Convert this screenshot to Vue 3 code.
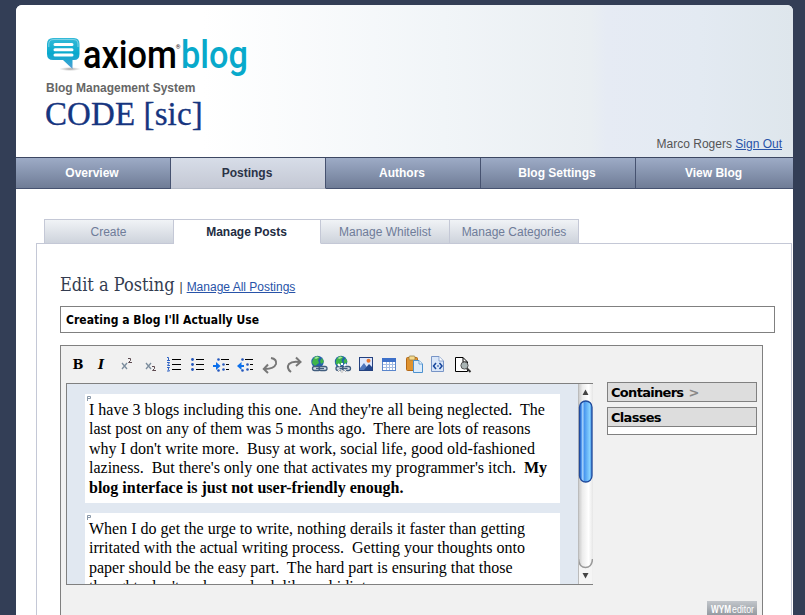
<script setup>
const nav = [
  { label: 'Overview' },
  { label: 'Postings', active: true },
  { label: 'Authors' },
  { label: 'Blog Settings' },
  { label: 'View Blog' },
]
const tabs = [
  { label: 'Create', cls: 'create' },
  { label: 'Manage Posts', cls: 'current' },
  { label: 'Manage Whitelist', cls: 'whitelist' },
  { label: 'Manage Categories', cls: 'categories' },
]
const paragraphs = [
  [
    { text: "I have 3 blogs including this one.\u00a0 And they're all being neglected.\u00a0 The" },
    { text: 'last post on any of them was 5 months ago.\u00a0 There are lots of reasons' },
    { text: "why I don't write more.\u00a0 Busy at work, social life, good old-fashioned" },
    { text: "laziness.\u00a0 But there's only one that activates my programmer's itch.\u00a0 ", bold: 'My' },
    { text: '', bold: 'blog interface is just not user-friendly enough.' },
  ],
  [
    { text: 'When I do get the urge to write, nothing derails it faster than getting' },
    { text: 'irritated with the actual writing process.\u00a0 Getting your thoughts onto' },
    { text: 'paper should be the easy part.\u00a0 The hard part is ensuring that those' },
    { text: "thoughts don't make you look like a chidiot." },
  ],
]
</script>

<template>
  <div class="page">
    <header class="header">
      <svg class="logo" width="204" height="44" viewBox="0 0 204 44">
        <defs>
          <linearGradient id="bubble" x1="0" y1="0" x2="0" y2="1">
            <stop offset="0" stop-color="#35bad8" />
            <stop offset="0.5" stop-color="#08a9cd" />
            <stop offset="0.8" stop-color="#2fa5d2" />
            <stop offset="1" stop-color="#5b9bd3" />
          </linearGradient>
          <radialGradient id="shade">
            <stop offset="0" stop-color="#777" stop-opacity="0.7" />
            <stop offset="1" stop-color="#999" stop-opacity="0" />
          </radialGradient>
        </defs>
        <ellipse cx="23" cy="34" rx="11" ry="2" fill="url(#shade)" />
        <path d="M6 3H27Q32.500 3 32.500 9V19Q32.500 25 27 25H25.500V34L16 25H6Q0 25 0 19V9Q0 3 6 3Z" fill="url(#bubble)" />
        <path d="M1.800 12V9Q1.800 4.500 7 4.500H26Q31 4.500 31 9V12" fill="none" stroke="#7dd2e6" stroke-width="1" />
        <path d="M8 9.500H25M8 14.700H25M8 20H25" stroke="#fff" stroke-width="3" stroke-linecap="round" />
        <text x="36" y="33" class="word" fill="#000" textLength="94" lengthAdjust="spacingAndGlyphs">axiom</text>
        <text x="128.800" y="14" class="reg" fill="#111">®</text>
        <text x="134" y="33" class="word" fill="#08a9cb" textLength="67" lengthAdjust="spacingAndGlyphs">blog</text>
      </svg>
      <div class="tagline">Blog Management System</div>
      <div class="title-row">
        <h1>CODE [sic]</h1>
        <div class="user">Marco Rogers <a>Sign Out</a></div>
      </div>
    </header>

    <nav class="nav">
      <a v-for="n in nav" :key="n.label" :class="{ active: n.active }">{{ n.label }}</a>
    </nav>

    <div class="tabs">
      <a v-for="t in tabs" :key="t.label" :class="t.cls">{{ t.label }}</a>
    </div>

    <main class="panel">
      <div class="heading">
        <h2>Edit a Posting</h2><span class="bar">|</span><a>Manage All Postings</a>
      </div>
      <div class="title-input"><span>Creating a Blog I'll Actually Use</span></div>

      <div class="editor">
        <div class="left">
          <svg class="tools" width="410" height="20" viewBox="0 0 410 20">
            <text x="6.500" y="15" class="bold">B</text>
            <text x="32" y="15" class="bold ital">I</text>
            <g fill="none" stroke="#7b8c9d" stroke-width="1.300">
              <path d="M56 9L61 15M61 9L56 15" />
              <path d="M80 9L85 15M85 9L80 15" />
            </g>
            <g fill="none" stroke="#5d4a50" stroke-width="1">
              <path d="M62 4.500H64.500V6.500L62.500 8.500H66" />
              <path d="M86 12.500H88.500V14.500L86.500 16.500H90" />
            </g>
            <g stroke="#000" stroke-width="1">
              <path d="M106 5.500H115M106 10.500H115M106 15.500H115" />
              <path d="M130 5.500H138M130 10.500H138M130 15.500H138" />
              <path d="M155 5.500H163M160 10.500H163M160 15.500H163" />
              <path d="M179 5.500H187M184 10.500H187M184 15.500H187" />
            </g>
            <path d="M101 3.500H102.500V6.500M101 6.500H104M101 8.500H103.500L101.500 11.500H104M101 13.500H103.500L102 15L103.500 17H101" fill="none" stroke="#2f62c4" />
            <g fill="#2457bd">
              <circle cx="126.500" cy="5.500" r="1.400" /><circle cx="126.500" cy="10.500" r="1.400" /><circle cx="126.500" cy="15.500" r="1.400" />
              <circle cx="152.500" cy="5.500" r="1.300" /><circle cx="157.500" cy="10.500" r="1.300" /><circle cx="157.500" cy="15.500" r="1.300" /><circle cx="152.500" cy="16.500" r="1.300" />
              <circle cx="176.500" cy="5.500" r="1.300" /><circle cx="181.500" cy="10.500" r="1.300" /><circle cx="181.500" cy="15.500" r="1.300" /><circle cx="176.500" cy="16.500" r="1.300" />
            </g>
            <path d="M147 11H150V8L154.500 12L150 16V13H147ZM178 11H175.500V8L171 12L175.500 16V13H178Z" fill="#0c70ec" />
            <g fill="none" stroke="#777" stroke-width="2">
              <path d="M205 4Q211 5 210 10Q208 15 199 15" />
              <path d="M202 10.500L197.800 15L202 19" />
              <path d="M225 18Q220 14 223 10Q226 7 233 8" />
              <path d="M230 3.500L234.500 8L230 12" />
            </g>
            <g v-for="x in [0, 23.500]" :key="x" :transform="`translate(${x} 0)`">
              <circle cx="251.500" cy="8" r="6.200" fill="#2461ad" />
              <path d="M247 5L250 2L254 3L252 6L253 9L249 12L246 9ZM256 4L258 8L255 10L254 7Z" fill="#3eb54a" />
              <path d="M248 4L251 2.500L253 3.500L250 5Z" fill="#a9e59d" />
              <rect x="246.500" y="12.500" width="8" height="4" rx="2" fill="#d4dde8" stroke="#415d7e" stroke-width="1.300" />
              <rect x="253" y="12.500" width="8" height="4" rx="2" fill="#d4dde8" stroke="#415d7e" stroke-width="1.300" />
              <path d="M250 14.500H258" stroke="#415d7e" stroke-width="1.200" />
            </g>
            <path d="M276 9V11M272 10L274 12M280 10L278 12M276 16V19M272 18L274 16M280 18L278 16" stroke="#fff" stroke-width="2" />
            <path d="M276 16V19M272 18L274 16M280 18L278 16" stroke="#888" stroke-width="0.700" />
            <rect x="293.500" y="3.500" width="13" height="13" fill="#dfe7fb" stroke="#24417f" />
            <path d="M294 14L298 9L303 16H294Z" fill="#4e75bd" />
            <path d="M298 16L303 10L306 13V16Z" fill="#24478e" />
            <circle cx="302.500" cy="6.800" r="2" fill="#e9752e" />
            <rect x="316.500" y="4.500" width="13" height="12" fill="#fff" stroke="#5a86cc" />
            <path d="M316 4H330V8H316Z" fill="#3d70c9" />
            <path d="M317 10.500H329M317 13.500H329M320.500 8V16M323.500 8V16M326.500 8V16" stroke="#a4bce3" />
            <rect x="340.500" y="3.500" width="11" height="13" rx="1" fill="#df9330" stroke="#b56816" />
            <rect x="343" y="2" width="6" height="4" rx="1" fill="#f7da8d" stroke="#94804a" stroke-width="0.800" />
            <path d="M347.500 6.500H353L356.500 10V18.500H347.500Z" fill="#ddecfb" stroke="#4c91cf" />
            <path d="M353 6.500V10H356" fill="#fff" stroke="#4c91cf" stroke-width="0.800" />
            <path d="M365.500 2.500H373L377.500 7V17.500H365.500Z" fill="#d9e6f8" stroke="#7794c6" />
            <path d="M373 2.500V7H377" fill="#fff" stroke="#7794c6" stroke-width="0.800" />
            <path d="M370 9L367.500 12L370 15M373.500 9L376 12L373.500 15" fill="none" stroke="#17469c" stroke-width="1.500" />
            <path d="M371 12H373" stroke="#17469c" />
            <path d="M389.500 3.500H397L401.500 8V17.500H389.500Z" fill="#fff" stroke="#000" />
            <path d="M397 3.500V8H401" fill="none" stroke="#000" />
            <path d="M400.500 14L404.500 18" stroke="#333" stroke-width="2" />
            <circle cx="398.500" cy="11.500" r="3.600" fill="#aab5b5" stroke="#555" />
          </svg>

          <div class="frame">
            <div class="content">
              <div v-for="(para, i) in paragraphs" :key="i" class="para">
                <svg class="mark" width="4" height="5" viewBox="0 0 4 5"><path d="M0.500 5V0.500H3.500V2.500H0.500" fill="none" stroke="#8897a8" /></svg>
                <p v-for="line in para" :key="line.text">{{ line.text }}<b v-if="line.bold">{{ line.bold }}</b></p>
              </div>
            </div>
            <div class="scroll">
              <svg width="15" height="200" viewBox="0 0 15 200">
                <defs>
                  <linearGradient id="track"><stop offset="0" stop-color="#c4c4c4" /><stop offset="0.300" stop-color="#ececec" /><stop offset="0.700" stop-color="#fff" /><stop offset="1" stop-color="#e6e6e6" /></linearGradient>
                  <linearGradient id="thumb"><stop offset="0" stop-color="#1a55c4" /><stop offset="0.150" stop-color="#4d94ec" /><stop offset="0.250" stop-color="#a5d1fb" /><stop offset="0.400" stop-color="#4a98ef" /><stop offset="0.800" stop-color="#85d0ff" /><stop offset="1" stop-color="#3d86de" /></linearGradient>
                </defs>
                <rect width="15" height="200" fill="url(#track)" />
                <path d="M0.500 175Q1 183.500 7.500 183.500Q14 183.500 14.500 175V200H0.500Z" fill="#f5f5f5" />
                <path d="M0.500 175Q1 183.500 7.500 183.500Q14 183.500 14.500 175" fill="none" stroke="#999" stroke-width="1.500" />
                <path d="M0.500 0V200" stroke="#bbb" />
                <rect x="1.500" y="17" width="12.500" height="81" rx="6.200" fill="url(#thumb)" stroke="#214b9c" stroke-width="1.300" />
                <path d="M4.500 11L7.500 5.500L10.500 11ZM4.500 189L7.500 194.500L10.500 189Z" fill="#444" />
              </svg>
            </div>
          </div>
        </div>

        <aside class="side">
          <div class="box"><span>Containers</span><span class="gt">&gt;</span></div>
          <div class="box"><span>Classes</span></div>
          <div class="empty"></div>
          <div class="brand">
            <svg width="50" height="16" viewBox="0 0 50 16">
              <text x="4" y="12" class="wym" textLength="20" lengthAdjust="spacingAndGlyphs">WYM</text>
              <text x="25" y="12" class="ed" textLength="22" lengthAdjust="spacingAndGlyphs">editor</text>
            </svg>
          </div>
        </aside>
      </div>
    </main>
  </div>
</template>

<style>
body { background: #333e56; overflow: hidden; }
</style>

<style scoped>
* { box-sizing: border-box; }
h1, h2, p { margin: 0; font-weight: normal; }
.page {
  margin: 5px 12px 0 16px;
  height: 610px;
  background: #fff;
  border-radius: 6px 6px 0 0;
  overflow: hidden;
  font-family: "Liberation Sans", Arial, sans-serif;
  font-size: 12px;
  display: flex;
  flex-direction: column;
}
.header {
  height: 152px;
  flex: none;
  background: linear-gradient(90deg, #fff 24%, #f1f5f8 55%, #e9eef2 74%, #e6ebf4 76%, #e3eaf2 88%, #dee6ec 100%);
  padding: 30px 10px 0 29px;
  display: flex;
  flex-direction: column;
}
.logo { display: block; flex: none; margin-left: 2px; overflow: visible; }
.word { font-family: Roboto, sans-serif; font-size: 39px; font-weight: 500; }
.reg { font-family: Roboto, sans-serif; font-size: 6px; }
.tagline {
  font-weight: bold;
  color: #666;
  line-height: 14px;
  margin: 2px 0 0 1px;
}
.title-row { display: flex; justify-content: space-between; height: 62px; }
h1 {
  font-family: "Liberation Serif", Georgia, serif;
  font-size: 33px;
  line-height: 38px;
  letter-spacing: 0.1px;
  color: #16357f;
  -webkit-text-stroke: 0.3px #16357f;
  white-space: nowrap;
}
.user { align-self: flex-end; padding: 0 1px 6px 0; line-height: 14px; color: #555; }
a { text-decoration: none; }
.user a, .heading a { color: #2853a8; text-decoration: underline; }
.nav {
  flex: none;
  height: 32px;
  display: flex;
  border-top: 1px solid #3c4762;
}
.nav a {
  width: 155px;
  border-right: 1px solid #465270;
  border-bottom: 1px solid #465270;
  background: linear-gradient(#9dabc6, #6f7c96);
  color: #fff;
  font-weight: bold;
  text-align: center;
  line-height: 30px;
  padding-right: 2px;
}
.nav a:last-child { width: auto; flex: 1; border-right: 0; }
.nav a.active { background: linear-gradient(#d7dde8, #c4c8d4); color: #2b3347; border-bottom-color: #b3b9c6; }
.tabs { flex: none; display: flex; margin: 30px 0 0 28px; height: 25px; position: relative; z-index: 1; }
.tabs a {
  border: 1px solid #c4c8d6;
  border-left: 0;
  background: linear-gradient(#f0f3f6, #ced3dc);
  color: #6f7c99;
  text-align: center;
  line-height: 24px;
}
.tabs .create { width: 130px; border-left: 1px solid #c4c8d6; padding-right: 1px; }
.tabs .current { width: 147px; background: #fff; color: #222c42; font-weight: bold; border-bottom-color: #fff; padding-right: 1px; }
.tabs .whitelist { width: 129px; }
.tabs .categories { width: 129px; }
.panel {
  flex: 1;
  margin: -1px 1px 0 20px;
  border: 1px solid #c4c8d6;
  border-bottom: 0;
  padding: 28px 16px 0 23px;
}
.heading { display: flex; align-items: baseline; height: 34px; line-height: 26px; white-space: nowrap; }
h2 { font-family: "DejaVu Serif Condensed", "DejaVu Serif", Georgia, serif; font-size: 18px; color: #333c50; }
.bar { margin: 0 4px 0 5px; color: #333; }
.title-input {
  height: 27px;
  border: 1px solid #808080;
  padding-left: 5px;
  font: bold 12px/26px "DejaVu Sans Condensed", "DejaVu Sans", sans-serif;
  letter-spacing: 0.04px;
  color: #000;
}
.editor {
  width: 703px;
  height: 290px;
  margin-top: 12px;
  border: 1px solid #808080;
  background: #f1f1f1;
  padding: 8px 5px 0;
  display: flex;
  justify-content: space-between;
}
.left { width: 527px; }
.tools { display: block; }
.bold { font: bold 13px "DejaVu Serif", serif; }
.ital { font-style: italic; }
.frame {
  margin-top: 9px;
  height: 202px;
  border: 1px solid #808080;
  border-right: 0;
  background: #e1e8f1;
  display: flex;
  justify-content: space-between;
  overflow: hidden;
}
.content { padding: 10px 0 0 18px; }
.para {
  width: 475px;
  height: 109px;
  margin-bottom: 10px;
  background: #fff;
  padding: 2px 0 0 2px;
  font-family: "Liberation Serif", "Times New Roman", serif;
  font-size: 16px;
  color: #000;
}
.mark { display: block; margin-bottom: -1px; }
.para p { white-space: pre; height: 19.400px; line-height: 19.400px; margin-left: 2px; }
.scroll { width: 15px; }
.scroll svg { display: block; }
.side {
  width: 150px;
  padding-top: 28px;
  font: bold 13px/19px "DejaVu Sans", Verdana, sans-serif;
  letter-spacing: -0.7px;
}
.box { height: 20px; border: 1px solid #808080; background: #ddd; padding-left: 3px; display: flex; }
.box + .box { margin-top: 5px; }
.gt { color: #888; margin-left: 5px; }
.empty { height: 9px; background: #fff; border: 1px solid #808080; margin-top: -1px; }
.brand { margin: 166px 0 0 100px; background: linear-gradient(#c2c6cb, #8e949b); letter-spacing: 0; }
.brand svg { display: block; }
.wym { font: bold 10px "Liberation Sans", sans-serif; fill: #fff; }
.ed { font: 10px "Liberation Sans", sans-serif; fill: #fff; }
</style>
